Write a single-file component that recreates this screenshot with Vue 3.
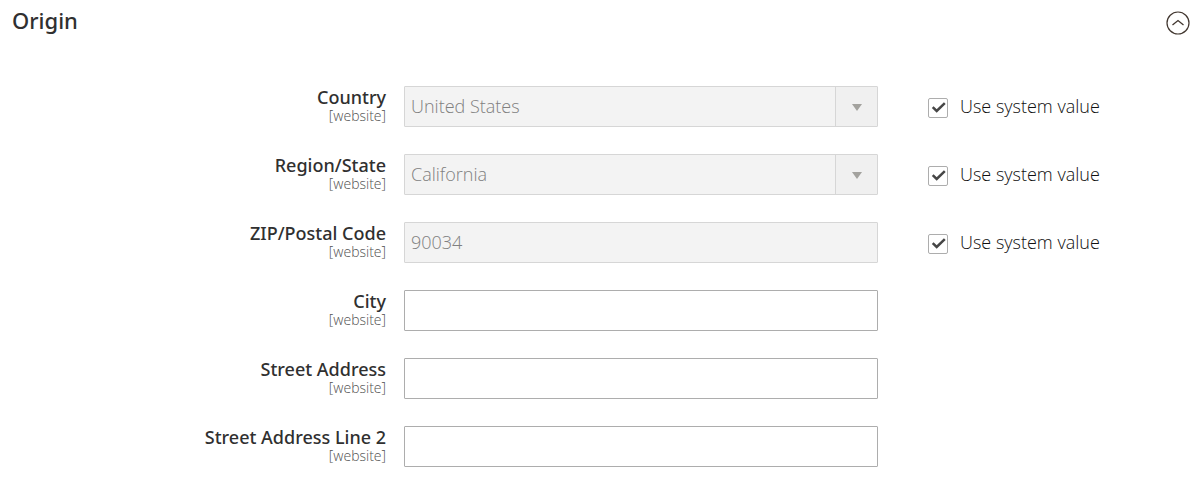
<script setup>
import { reactive } from 'vue'
const fields = reactive([
  { id: 'country', label: 'Country', value: 'United States', select: true, inherit: true },
  { id: 'region', label: 'Region/State', value: 'California', select: true, inherit: true },
  { id: 'zip', label: 'ZIP/Postal Code', value: '90034', inherit: true },
  { id: 'city', label: 'City', value: '' },
  { id: 'street1', label: 'Street Address', value: '' },
  { id: 'street2', label: 'Street Address Line 2', value: '' }
])
</script>

<template>
  <section class="origin">
    <header>
      <h2>Origin</h2>
      <button type="button" class="toggle" aria-label="Collapse Origin">
        <svg viewBox="0 0 24 24" width="24" height="24" fill="none" stroke="#41362f">
          <circle cx="12" cy="12" r="11" stroke-width="1.2" />
          <path d="M6.5 14 12 9.5l5.5 4.5" stroke-width="1.3" />
        </svg>
      </button>
    </header>
    <form>
      <div v-for="f in fields" :key="f.id" class="row">
        <label class="name" :for="f.id">
          <span class="title">{{ f.label }}</span>
          <span class="scope">[website]</span>
        </label>
        <div v-if="f.select" class="control">
          <select :id="f.id" v-model="f.value" :disabled="f.inherit">
            <option>{{ f.value }}</option>
          </select>
          <span class="arrow"><svg width="10" height="7" viewBox="0 0 10 7"><path d="M0 0h10L5 7z" fill="#a3a29e" /></svg></span>
        </div>
        <div v-else class="control">
          <input :id="f.id" v-model="f.value" type="text" :disabled="f.inherit" />
        </div>
        <label v-if="'inherit' in f" class="inherit">
          <span class="box">
            <input v-model="f.inherit" type="checkbox" />
            <svg v-if="f.inherit" viewBox="0 0 20 20" width="20" height="20"><path d="M4.7 9.2 8.7 13 16.8 5.2" fill="none" stroke="#464646" stroke-width="2.5" /></svg>
          </span>
          <span>Use system value</span>
        </label>
      </div>
    </form>
  </section>
</template>

<style>
body { background: #fff; }
</style>

<style scoped>
.origin { font-family: "Open Sans", sans-serif; color: #303030; padding: 6px 12px 16px; }
.origin * { box-sizing: border-box; }
header { display: flex; justify-content: space-between; align-items: flex-start; }
h2 { margin: 0; font-family: "Noto Sans", sans-serif; font-size: 22px; line-height: 28px; font-weight: 500; }
.toggle { display: block; width: 24px; height: 24px; margin-top: 5px; padding: 0; border: 0; background: none; }
.toggle svg { display: block; }
form { display: grid; gap: 27px; padding-top: 51px; }
.row { display: grid; grid-template-columns: 374fr 18px 474fr 50px 262fr; min-height: 41px; }
.name { text-align: right; padding-top: 1px; white-space: nowrap; }
.title { display: block; font-family: "Noto Sans", sans-serif; font-size: 18px; line-height: 20px; font-weight: 500; }
.scope { display: block; font-size: 14px; line-height: 18px; font-weight: 300; color: #505050; }
.control { position: relative; grid-column: 3; }
.control input, select { display: block; width: 100%; height: 41px; padding: 0 6px 1px; border: 1px solid #adadad; border-radius: 1px; background: #fff; color: #303030; font: 300 18px "Open Sans", sans-serif; appearance: none; outline: 0; }
.control input:disabled, select:disabled { border-color: #d6d6d6; background: #f3f3f3; color: #808080; opacity: 1; }
.arrow { position: absolute; top: 1px; right: 1px; bottom: 1px; width: 42px; border-left: 1px solid #d6d6d6; background: #f0f0f0; display: flex; align-items: center; justify-content: center; padding-top: 1px; pointer-events: none; }
.inherit { grid-column: 5; display: flex; align-items: flex-start; gap: 12px; padding-top: 8px; font-size: 18px; font-weight: 300; color: #101010; line-height: 24px; white-space: nowrap; }
.box { position: relative; width: 20px; height: 20px; margin-top: 4px; }
.box input { display: block; width: 20px; height: 20px; margin: 0; border: 1px solid #adadad; border-radius: 2px; background: #fff; appearance: none; }
.box svg { position: absolute; inset: 0; pointer-events: none; }
</style>
